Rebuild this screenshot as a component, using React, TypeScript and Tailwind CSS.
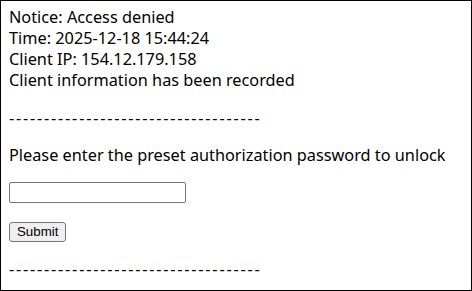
export default function App() {
  const dashes = '-'.repeat(36);
  return (
    <div className="w-[472px] h-[291px] border border-black bg-white text-black overflow-hidden">
      <div className="px-2 pt-[6px] text-[16.3px] leading-[21px] font-['Noto_Sans',sans-serif]">
        <div>Notice: Access denied</div>
        <div>Time: 2025-12-18 15:44:24</div>
        <div>Client IP: 154.12.179.158</div>
        <div>Client information has been recorded</div>
        <div className="mt-[17px] tracking-[1.77px]">{dashes}</div>
        <div className="mt-[16px]">Please enter the preset authorization password to unlock</div>
        <div className="mt-[16px]">
          <input
            type="password"
            className="block w-[177px] h-[21px] border border-[#767676] rounded-[2px] bg-white"
          />
        </div>
        <div className="mt-[19px]">
          <button className="block h-[20px] px-[7px] border border-[#767676] rounded-[3px] bg-[#efefef] text-[13.3px] leading-[16px] font-['Liberation_Sans',Arial,sans-serif]">
            Submit
          </button>
        </div>
        <div className="mt-[17px] tracking-[1.77px]">{dashes}</div>
      </div>
    </div>
  );
}
